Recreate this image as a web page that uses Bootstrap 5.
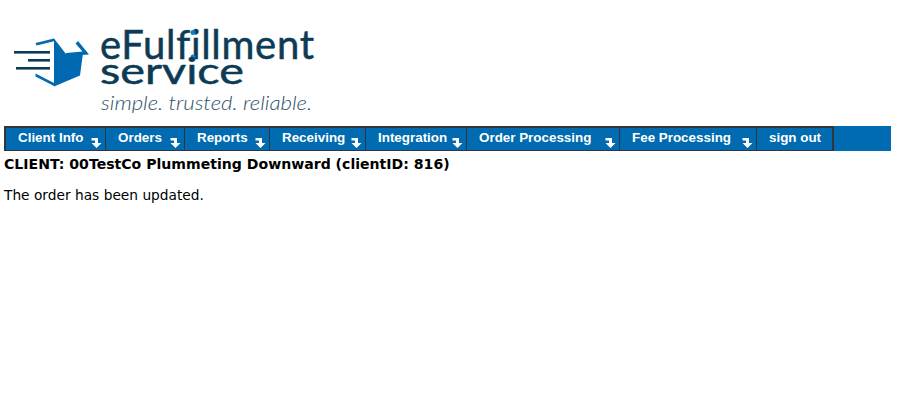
<!DOCTYPE html>
<html lang="en"><head><meta charset="utf-8"><title>eFulfillment Service</title>
<link href="https://cdn.jsdelivr.net/npm/bootstrap@5.3.0/dist/css/bootstrap.min.css" rel="stylesheet">
<style>
body{background:#fff;color:#000;font-family:"DejaVu Sans",sans-serif;font-size:13.75px;line-height:16px;padding:0 24px 0 4px}
.logo-wrap{height:126px}
.logo-wrap svg{display:block}
.logo-word{font-family:Lato,sans-serif;fill:#0d3b55;stroke:#0d3b55;stroke-width:.5px;font-variant-ligatures:none}
.logo-tag{font-family:Lato,sans-serif;font-style:italic;font-weight:300;fill:#2b4f66}
.menu-bar{background:#006bb0;height:25px}
.menu-list{border:solid #30363b;border-width:2px 0 1px 2px;height:25px;margin:0;padding:0;list-style:none;width:830px}
.menu-entry{border-right:1px solid #30363b;height:22px;color:#fff;font:bold 13.4px/19px "Liberation Sans",sans-serif;padding-left:12px;position:relative;white-space:nowrap}
.menu-entry svg{position:absolute;bottom:2px;right:3px}
.e1{width:100px}.e2{width:79px}.e3{width:85px}.e4{width:96px}.e5{width:101px}.e6{width:153px}.e7{width:137px}.e8{width:77px;border-right-width:2px}
.client-line{font-size:14.08px;font-weight:700;line-height:17px;margin:5px 0 14px}
.status-line{line-height:17px;margin:0}
</style></head><body>
<div class="logo-wrap">
<svg width="340" height="126" viewBox="4 0 340 126" role="img" aria-label="eFulfillment service logo">
<g fill="#0069b1">
<path d="M35.500 43 L54 38.500 L55 41 L36.500 45.500 Z"/>
<path d="M35.500 73.500 L54 83 L54 86 L35.500 76.500 Z"/>
<path d="M54 38.500 L66 54 L83 53 L80 75.500 L54 86.500 Z"/>
<path d="M66 56 L89 54.500 L78 41 L75.500 43.500 L82.500 51.500 L66 53 Z"/>
</g>
<g fill="#0d3b55"><rect x="14" y="51" width="36" height="2.600"/><rect x="28" y="59" width="22" height="2.600"/><rect x="16" y="67" width="34" height="2.600"/></g>
<text class="logo-word" x="100" y="59" font-size="40" textLength="214" lengthAdjust="spacing">eFulfillment</text>
<circle cx="193" cy="32.500" r="2.500" fill="#0f7fc4"/><circle cx="193" cy="57" r="2.500" fill="#0f7fc4"/>
<text class="logo-word" x="100" y="84" font-size="37" textLength="144" lengthAdjust="spacingAndGlyphs">service</text>
<text class="logo-tag" x="101" y="110" font-size="19" textLength="211" lengthAdjust="spacingAndGlyphs">simple. trusted. reliable.</text>
</svg>
</div>
<nav class="menu-bar">
<ul class="menu-list d-flex">
<li class="menu-entry e1">Client Info<svg width="11" height="10" viewBox="0 0 11 10"><path fill="#fff" d="M.5 0H7V5h3.500L5.500 10 .5 5H4V2.500H.5z"/></svg></li>
<li class="menu-entry e2">Orders<svg width="11" height="10" viewBox="0 0 11 10"><path fill="#fff" d="M.5 0H7V5h3.500L5.500 10 .5 5H4V2.500H.5z"/></svg></li>
<li class="menu-entry e3">Reports<svg width="11" height="10" viewBox="0 0 11 10"><path fill="#fff" d="M.5 0H7V5h3.500L5.500 10 .5 5H4V2.500H.5z"/></svg></li>
<li class="menu-entry e4">Receiving<svg width="11" height="10" viewBox="0 0 11 10"><path fill="#fff" d="M.5 0H7V5h3.500L5.500 10 .5 5H4V2.500H.5z"/></svg></li>
<li class="menu-entry e5">Integration<svg width="11" height="10" viewBox="0 0 11 10"><path fill="#fff" d="M.5 0H7V5h3.500L5.500 10 .5 5H4V2.500H.5z"/></svg></li>
<li class="menu-entry e6">Order Processing<svg width="11" height="10" viewBox="0 0 11 10"><path fill="#fff" d="M.5 0H7V5h3.500L5.500 10 .5 5H4V2.500H.5z"/></svg></li>
<li class="menu-entry e7">Fee Processing<svg width="11" height="10" viewBox="0 0 11 10"><path fill="#fff" d="M.5 0H7V5h3.500L5.500 10 .5 5H4V2.500H.5z"/></svg></li>
<li class="menu-entry e8">sign out</li>
</ul>
</nav>
<p class="client-line">CLIENT: 00TestCo Plummeting Downward (clientID: 816)</p>
<p class="status-line">The order has been updated.</p>
<script src="https://cdn.jsdelivr.net/npm/bootstrap@5.3.0/dist/js/bootstrap.bundle.min.js"></script>
</body></html>
